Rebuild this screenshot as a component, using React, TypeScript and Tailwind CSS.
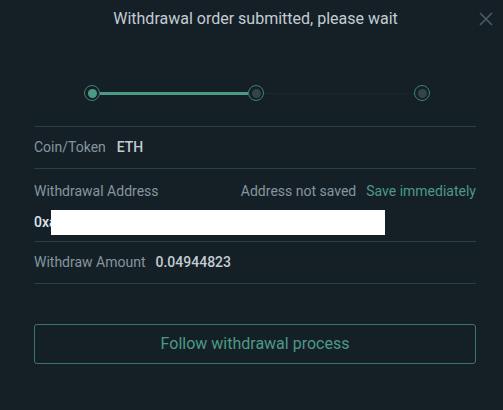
import React from 'react'

// Withdrawal submitted dialog

function StepDot({ active }: { active?: boolean }) {
  return (
    <div className="w-[16px] h-[16px] rounded-full border-[1.5px] border-[#3d8373] flex items-center justify-center shrink-0">
      <div className={`w-[9px] h-[9px] rounded-full ${active ? 'bg-[#4c9a84]' : 'bg-[#34454a]'}`} />
    </div>
  )
}

export default function App() {
  return (
    <div
      className="w-[503px] h-[410px] bg-[#152026] relative"
      style={{ fontFamily: 'Roboto, "Liberation Sans", sans-serif' }}
    >
      <button className="absolute right-[10px] top-[12px] text-[#4a5b61]">
        <svg width="14" height="14" viewBox="0 0 14 14" fill="none" stroke="currentColor" strokeWidth="1.6">
          <path d="M1 1L13 13M13 1L1 13" />
        </svg>
      </button>

      <h1 className="pt-[8px] pl-[8px] text-center text-[16px] leading-[22px] text-[#c3ccd4]">
        Withdrawal order submitted, please wait
      </h1>

      {/* stepper */}
      <div className="mt-[55px] ml-[84px] w-[346px] flex items-center">
        <StepDot active />
        <div className="w-[148px] h-[3px] bg-[#4c9a84]" />
        <StepDot />
        <div className="flex-1 border-t border-dotted border-[#1e3034]" />
        <StepDot />
      </div>

      <div className="ml-[34px] mr-[27px] mt-[25px] text-[14px] text-[#8595a0]">
        <div className="border-t border-[#2c4044] h-[42px] flex items-center">
          <span>Coin/Token</span>
          <span className="ml-[11px] font-medium text-[#c3ccd4]">ETH</span>
        </div>
        <div className="border-t border-[#2c4044] pt-[14px] h-[73px]">
          <div className="flex items-center justify-between leading-[16px]">
            <span>Withdrawal Address</span>
            <span>
              Address not saved
              <span className="ml-[10px] text-[#4c9a84]">Save immediately</span>
            </span>
          </div>
          <div className="mt-[11px] flex items-center h-[25px]">
            <span className="font-medium text-[#dfe5ea]">0xa</span>
            <div className="-ml-[6px] w-[334px] h-[25px] bg-white" />
          </div>
        </div>
        <div className="border-t border-[#2c4044] border-b h-[43px] flex items-center">
          <span>Withdraw Amount</span>
          <span className="ml-[10px] font-medium text-[#c3ccd4]">0.04944823</span>
        </div>

        <button className="mt-[40px] w-full h-[40px] rounded-[3px] border border-[#3b7468] text-[16px] text-[#4c9a84]">
          Follow withdrawal process
        </button>
      </div>
    </div>
  )
}
